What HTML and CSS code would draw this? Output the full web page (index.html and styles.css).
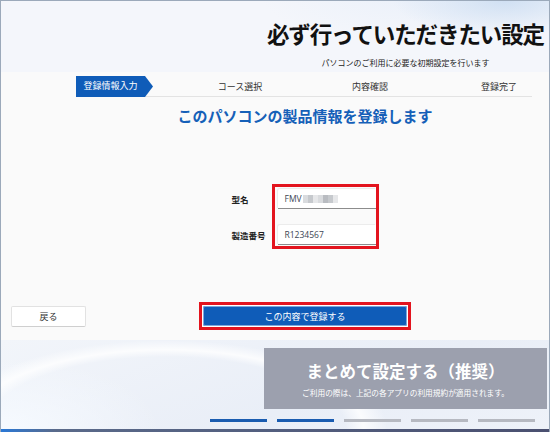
FILE: index.html
```html
<!DOCTYPE html>
<html lang="ja">
<head>
<meta charset="utf-8">
<title>必ず行っていただきたい設定</title>
<link rel="stylesheet" href="styles.css">
</head>
<body>
<div class="window">
  <header class="hero">
    <div class="hero-inner">
      <h1 class="title">必ず行っていただきたい設定</h1>
      <p class="subtitle">パソコンのご利用に必要な初期設定を行います</p>
    </div>
  </header>
  <main class="panel">
    <div class="content">
      <nav class="steps">
        <div class="step-cell"><span class="step-current">登録情報入力</span></div>
        <div class="step-cell">コース選択</div>
        <div class="step-cell">内容確認</div>
        <div class="step-cell step-last">登録完了</div>
      </nav>
      <h2 class="heading">このパソコンの製品情報を登録します</h2>
      <div class="form">
        <div class="labels">
          <div class="label">型名</div>
          <div class="label">製造番号</div>
        </div>
        <div class="highlight fields">
          <div class="field"><span class="val">FMV</span><span class="mosaic"><i class="m1"></i><i class="m2"></i><i class="m3"></i><i class="m1"></i><i class="m4"></i><i class="m2"></i><i class="m3"></i></span></div>
          <div class="field"><span class="val">R1234567</span></div>
        </div>
      </div>
    </div>
    <div class="actions">
      <button class="btn-back">戻る</button>
      <div class="highlight submit-wrap">
        <button class="btn-submit">この内容で登録する</button>
      </div>
    </div>
  </main>
  <section class="bottom">
    <div class="card">
      <div class="card-title">まとめて設定する（推奨）</div>
      <div class="card-sub">ご利用の際は、上記の各アプリの利用規約が適用されます。</div>
    </div>
    <div class="dots">
      <span class="dot on"></span><span class="dot on"></span><span class="dot"></span><span class="dot"></span><span class="dot"></span>
    </div>
  </section>
  <div class="taskbar"></div>
</div>
</body>
</html>
```
FILE: styles.css
```css
* { box-sizing: border-box; margin: 0; padding: 0; }
html, body { width: 550px; height: 432px; overflow: hidden; }
body {
  font-family: "Noto Sans CJK JP", "Noto Sans", sans-serif;
  background: #dfe6f0;
  color: #222;
}
.window {
  width: 550px;
  height: 432px;
  display: flex;
  flex-direction: column;
  border: 1px solid #9ba9ba;
  border-bottom: none;
  background: #eef2f8;
}
.hero {
  height: 71px;
  flex: none;
  display: flex;
  justify-content: flex-end;
  padding: 19px 5px 0 0;
  background:
    radial-gradient(ellipse 160px 50px at 92% 0%, rgba(205, 222, 242, 0.9), rgba(225, 234, 246, 0) 70%),
    radial-gradient(ellipse 220px 70px at 75% -10%, rgba(235, 241, 250, 1), rgba(244, 246, 251, 0) 70%),
    #f4f6fb;
}
.hero-inner { display: flex; flex-direction: column; align-items: center; }
.title {
  font-size: 22.5px;
  line-height: 26px;
  font-weight: 700;
  color: #111;
  letter-spacing: -1.1px;
}
.subtitle {
  font-size: 8px;
  line-height: 10px;
  color: #222;
  margin-top: 12px;
}
.panel {
  height: 268px;
  flex: none;
  background: #fafafa;
  display: flex;
  flex-direction: column;
}
.content {
  padding-left: 60px;
  display: flex;
  flex-direction: column;
  align-items: center;
}
.steps {
  align-self: flex-start;
  margin-left: 15px;
  margin-top: 4px;
  width: 456px;
  height: 21px;
  display: grid;
  grid-template-columns: 99px 130px 130px 97px;
  align-items: center;
  border-bottom: 1px solid #e3e3e3;
  font-size: 9px;
  color: #333;
}
.step-cell { text-align: center; line-height: 20px; }
.step-last { text-align: right; padding-right: 15px; }
.step-current {
  display: block;
  width: 77px;
  height: 21px;
  line-height: 20px;
  padding-right: 8px;
  background: #0f5cb8;
  color: #fff;
  text-align: center;
  clip-path: polygon(0 0, 69px 0, 77px 50%, 69px 100%, 0 100%);
}
.heading {
  margin-top: 9px;
  font-size: 15px;
  line-height: 20px;
  font-weight: 700;
  color: #1560b8;
}
.form {
  margin-top: 58px;
  display: flex;
  gap: 6px;
  align-items: flex-start;
}
.labels {
  width: 34px;
  display: flex;
  flex-direction: column;
  padding-top: 5px;
  gap: 16px;
}
.label {
  font-size: 8.5px;
  line-height: 20px;
  font-weight: 700;
  color: #222;
  white-space: nowrap;
}
.highlight { border: 3px solid #e3141e; }
.fields {
  width: 107px;
  height: 65px;
  padding: 2px 0 0 3px;
  display: flex;
  flex-direction: column;
  gap: 16px;
}
.field {
  width: 98px;
  height: 20px;
  background: #fff;
  border-bottom: 1px solid #8c8c8c;
  border-radius: 2px 0 0 0;
  box-shadow: -1px -1px 0 0 #ececec;
  padding-left: 7px;
  display: flex;
  align-items: center;
  font-family: "Open Sans", "Noto Sans", sans-serif;
  font-size: 8.5px;
  color: #3c4654;
}
.mosaic { display: inline-flex; margin-left: 1px; }
.mosaic i { display: block; width: 5px; height: 8px; }
.m1 { background: #d9dbde; }
.m2 { background: #c6c9cd; }
.m3 { background: #e6e7e9; }
.m4 { background: #b9bcc1; }
.actions {
  margin-top: 53px;
  padding-left: 10px;
  display: flex;
  align-items: center;
}
.btn-back {
  width: 75px;
  height: 21px;
  background: #fff;
  border: 1px solid #e2e2e2;
  border-bottom-color: #cfcfcf;
  border-radius: 2px;
  font-family: inherit;
  font-size: 9px;
  color: #333;
}
.submit-wrap {
  margin-left: 113px;
  width: 212px;
  height: 28px;
  padding: 1px;
  background: #fff;
}
.btn-submit {
  display: block;
  width: 100%;
  height: 20px;
  background: #0f5cb8;
  border: none;
  border-radius: 2px;
  box-shadow: inset 0 0 0 1px #7fa6d8;
  font-family: inherit;
  font-size: 9px;
  color: #fff;
}
.bottom {
  flex: 1;
  padding-top: 8px;
  display: flex;
  flex-direction: column;
  background:
    radial-gradient(ellipse 300px 120px at 30% 100%, rgba(255, 255, 255, 0.0) 60%, rgba(255, 255, 255, 0.8) 66%, rgba(255, 255, 255, 0) 74%),
    radial-gradient(ellipse 200px 90px at 0% 100%, rgba(246, 250, 255, 1), rgba(246, 250, 255, 0) 80%),
    linear-gradient(160deg, #f2f5fa 0%, #e9eef7 60%, #eef2f9 100%);
}
.card {
  margin-left: 263px;
  width: 283px;
  height: 61px;
  background: #9ca0ae;
  color: #fff;
  text-align: center;
  padding-top: 13px;
}
.card-title {
  font-size: 16.5px;
  line-height: 20px;
  font-weight: 700;
}
.card-sub {
  margin-top: 7px;
  font-size: 7.7px;
  line-height: 10px;
}
.dots {
  margin-top: 10px;
  margin-left: 209px;
  display: flex;
  gap: 10px;
}
.dot { display: block; width: 57px; height: 3px; background: #b6b9c1; }
.dot.on { background: #1a5cb0; }
.taskbar {
  height: 3px;
  flex: none;
  background: linear-gradient(90deg, #2a78d6 0%, #5a6a8a 10%, #4a5070 100%);
}
```
